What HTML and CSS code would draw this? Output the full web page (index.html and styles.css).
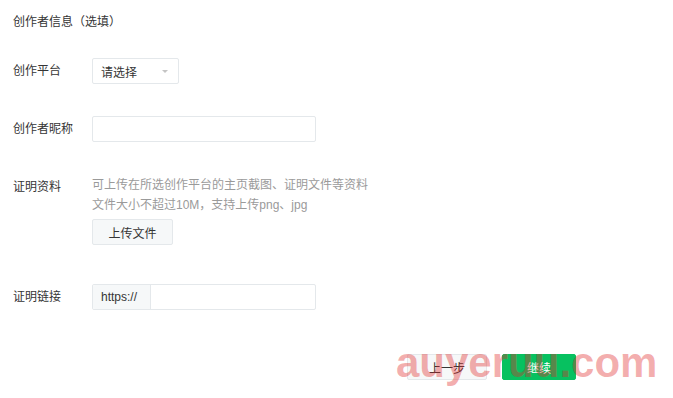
FILE: index.html
```html
<!DOCTYPE html>
<html lang="zh-CN">
<head>
	<meta charset="UTF-8">
	<title>创作者信息</title>
	<link rel="stylesheet" href="styles.css">
</head>
<body>
	<div class="form">
		<h3 class="title">创作者信息（选填）</h3>

		<div class="row first">
			<label class="label">创作平台</label>
			<div class="select">
				<span>请选择</span>
				<i class="caret"></i>
			</div>
		</div>

		<div class="row">
			<label class="label">创作者昵称</label>
			<div class="input"></div>
		</div>

		<div class="row proof">
			<label class="label">证明资料</label>
			<div class="field">
				<p class="tips">可上传在所选创作平台的主页截图、证明文件等资料<br>文件大小不超过10M，支持上传png、jpg</p>
				<button class="btn">上传文件</button>
			</div>
		</div>

		<div class="row link">
			<label class="label">证明链接</label>
			<div class="input group">
				<span class="prefix">https://</span>
				<span class="value"></span>
			</div>
		</div>

		<div class="actions">
			<button class="btn prev">上一步</button>
			<button class="btn primary">继续</button>
		</div>
	</div>

	<div class="watermark">auyeruu.com</div>
</body>
</html>
```

FILE: styles.css
```css
body{
	margin: 0;
	font-family: "Liberation Sans", "Noto Sans CJK SC", sans-serif;
	font-size: 12px;
	color: #353535;
	background: #fff;
	position: relative;
	height: 398px;
	overflow: hidden;
}
.form{
	padding: 12px 0 0 13px;
}
.title{
	margin: 0;
	font-size: 12px;
	font-weight: normal;
	line-height: 20px;
}
.row{
	display: flex;
	align-items: flex-start;
	margin-top: 32px;
}
.row.first{
	margin-top: 26px;
}
.row.proof{
	margin-top: 33px;
}
.row.link{
	margin-top: 39px;
}
.label{
	width: 79px;
	line-height: 26px;
	flex-shrink: 0;
}
.row.proof .label{
	line-height: 24px;
}
.select{
	width: 87px;
	height: 26px;
	box-sizing: border-box;
	border: 1px solid #e4e8eb;
	border-radius: 2px;
	display: flex;
	align-items: center;
	justify-content: space-between;
	padding: 0 10px 0 8px;
	color: #353535;
}
.caret{
	width: 0;
	height: 0;
	border-left: 3px solid transparent;
	border-right: 3px solid transparent;
	border-top: 3px solid #c4c4c4;
	margin-top: 1px;
}
.input{
	width: 224px;
	height: 26px;
	box-sizing: border-box;
	border: 1px solid #e4e8eb;
	border-radius: 2px;
}
.group{
	display: flex;
}
.prefix{
	width: 58px;
	box-sizing: border-box;
	background: #f6f8f9;
	border-right: 1px solid #e4e8eb;
	line-height: 24px;
	padding-left: 8px;
	border-radius: 2px 0 0 2px;
}
.tips{
	margin: 0;
	color: #9a9a9a;
	line-height: 20px;
}
.btn{
	display: block;
	height: 26px;
	box-sizing: border-box;
	font-family: inherit;
	font-size: 12px;
	color: #353535;
	background: #f6f8f9;
	border: 1px solid #e4e8eb;
	border-radius: 2px;
	padding: 0;
	cursor: pointer;
}
.field .btn{
	width: 81px;
	margin-top: 4px;
}
.actions{
	display: flex;
	justify-content: flex-end;
	gap: 15px;
	width: 563px;
	margin-top: 44px;
}
.actions .prev{
	width: 80px;
}
.actions .primary{
	width: 74px;
	background: #07c160;
	border-color: #07c160;
	color: #fff;
}
.watermark{
	position: absolute;
	left: 396px;
	top: 338px;
	font-family: "Liberation Sans", sans-serif;
	font-weight: bold;
	font-size: 42px;
	line-height: 50px;
	color: rgba(225, 40, 40, 0.38);
	letter-spacing: 0;
	pointer-events: none;
}
```
